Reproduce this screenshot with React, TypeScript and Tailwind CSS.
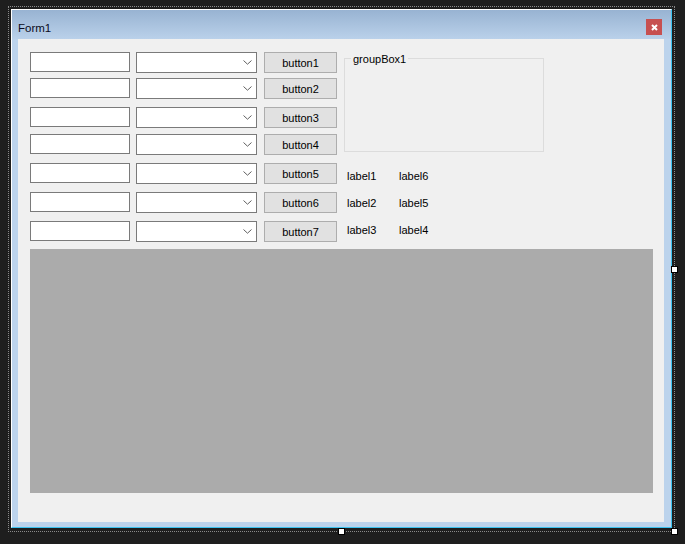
import React from "react";

const rowMargins = ["mt-0", "mt-[5px]", "mt-[8px]", "mt-[6px]", "mt-[8px]", "mt-[8px]", "mt-[8px]"];

function Chevron() {
  return (
    <svg width="9" height="5" viewBox="0 0 9 5" className="block">
      <polyline points="0.5,0.5 4.5,4.2 8.5,0.5" fill="none" stroke="#606060" strokeWidth="1" />
    </svg>
  );
}

function Row({ i }: { i: number }) {
  return (
    <div className={`flex items-start ${rowMargins[i]}`}>
      <div className="w-[100px] h-[20px] border border-[#7a7a7a] bg-white" />
      <div className="ml-[6px] w-[121px] h-[21px] border border-[#7a7a7a] bg-white flex items-start justify-end pt-[7px] pr-[4px]">
        <Chevron />
      </div>
      <div className="ml-[7px] w-[73px] h-[21px] pt-[1px] bg-[#e1e1e1] border border-[#adadad] flex items-center justify-center text-[11px] leading-[13px] text-black">
        button{i + 1}
      </div>
    </div>
  );
}

export default function App() {
  return (
    <div
      className="relative w-[685px] h-[544px] bg-[#1e1e1e] overflow-hidden"
      style={{ fontFamily: '"Liberation Sans", Arial, sans-serif' }}
    >
      <div className="absolute left-[8px] top-[6px] w-[667px] h-[526px] border border-dotted border-[#8a8a8a]" />
      <div className="relative pl-[11px] pt-[9px]">
        <div className="w-[661px] h-[519px] flex flex-col bg-[#bcd3ec] border-t border-l border-t-white border-l-white border-r border-b border-r-[#3cc3f0] border-b-[#3cc3f0]">
          <div className="h-[29px] flex items-start justify-between pt-[9px] pl-[6px] pr-[9px] bg-gradient-to-b from-[#98b3d2] to-[#bad1ea]">
            <span className="mt-[2px] text-[11.5px] leading-[14px] text-[#0b0b20]">Form1</span>
            <div className="w-[16px] h-[16px] bg-[#c75050] flex items-center justify-center">
              <svg width="7" height="7" viewBox="0 0 7 7">
                <path d="M1 1 L6 6 M6 1 L1 6" stroke="white" strokeWidth="2" fill="none" />
              </svg>
            </div>
          </div>
          <div className="ml-[6px] mr-[7px] h-[483px] bg-[#f0f0f0] pl-[12px] pt-[13px]">
            <div className="flex items-start">
              <div className="flex flex-col w-[307px]">
                {[0, 1, 2, 3, 4, 5, 6].map((i) => (
                  <Row key={i} i={i} />
                ))}
              </div>
              <div className="ml-[7px] flex flex-col">
                <fieldset className="-mt-[2px] w-[200px] h-[102px] border border-[#dcdcdc]">
                  <legend className="ml-[6px] px-[2px] pt-[3px] text-[11px] leading-[13px] text-black">groupBox1</legend>
                </fieldset>
                <div className="mt-[18px] pl-[3px] grid grid-cols-[52px_auto] gap-y-[14px] text-[11px] leading-[13px] text-black">
                  <span>label1</span>
                  <span>label6</span>
                  <span>label2</span>
                  <span>label5</span>
                  <span>label3</span>
                  <span>label4</span>
                </div>
              </div>
            </div>
            <div className="mt-[7px] w-[623px] h-[244px] bg-[#ababab]" />
          </div>
        </div>
      </div>
      <div className="absolute left-[671px] top-[266px] w-[7px] h-[7px] bg-white border border-black" />
      <div className="absolute left-[338px] top-[528px] w-[7px] h-[7px] bg-white border border-black" />
      <div className="absolute left-[671px] top-[528px] w-[7px] h-[7px] bg-white border border-black" />
    </div>
  );
}
